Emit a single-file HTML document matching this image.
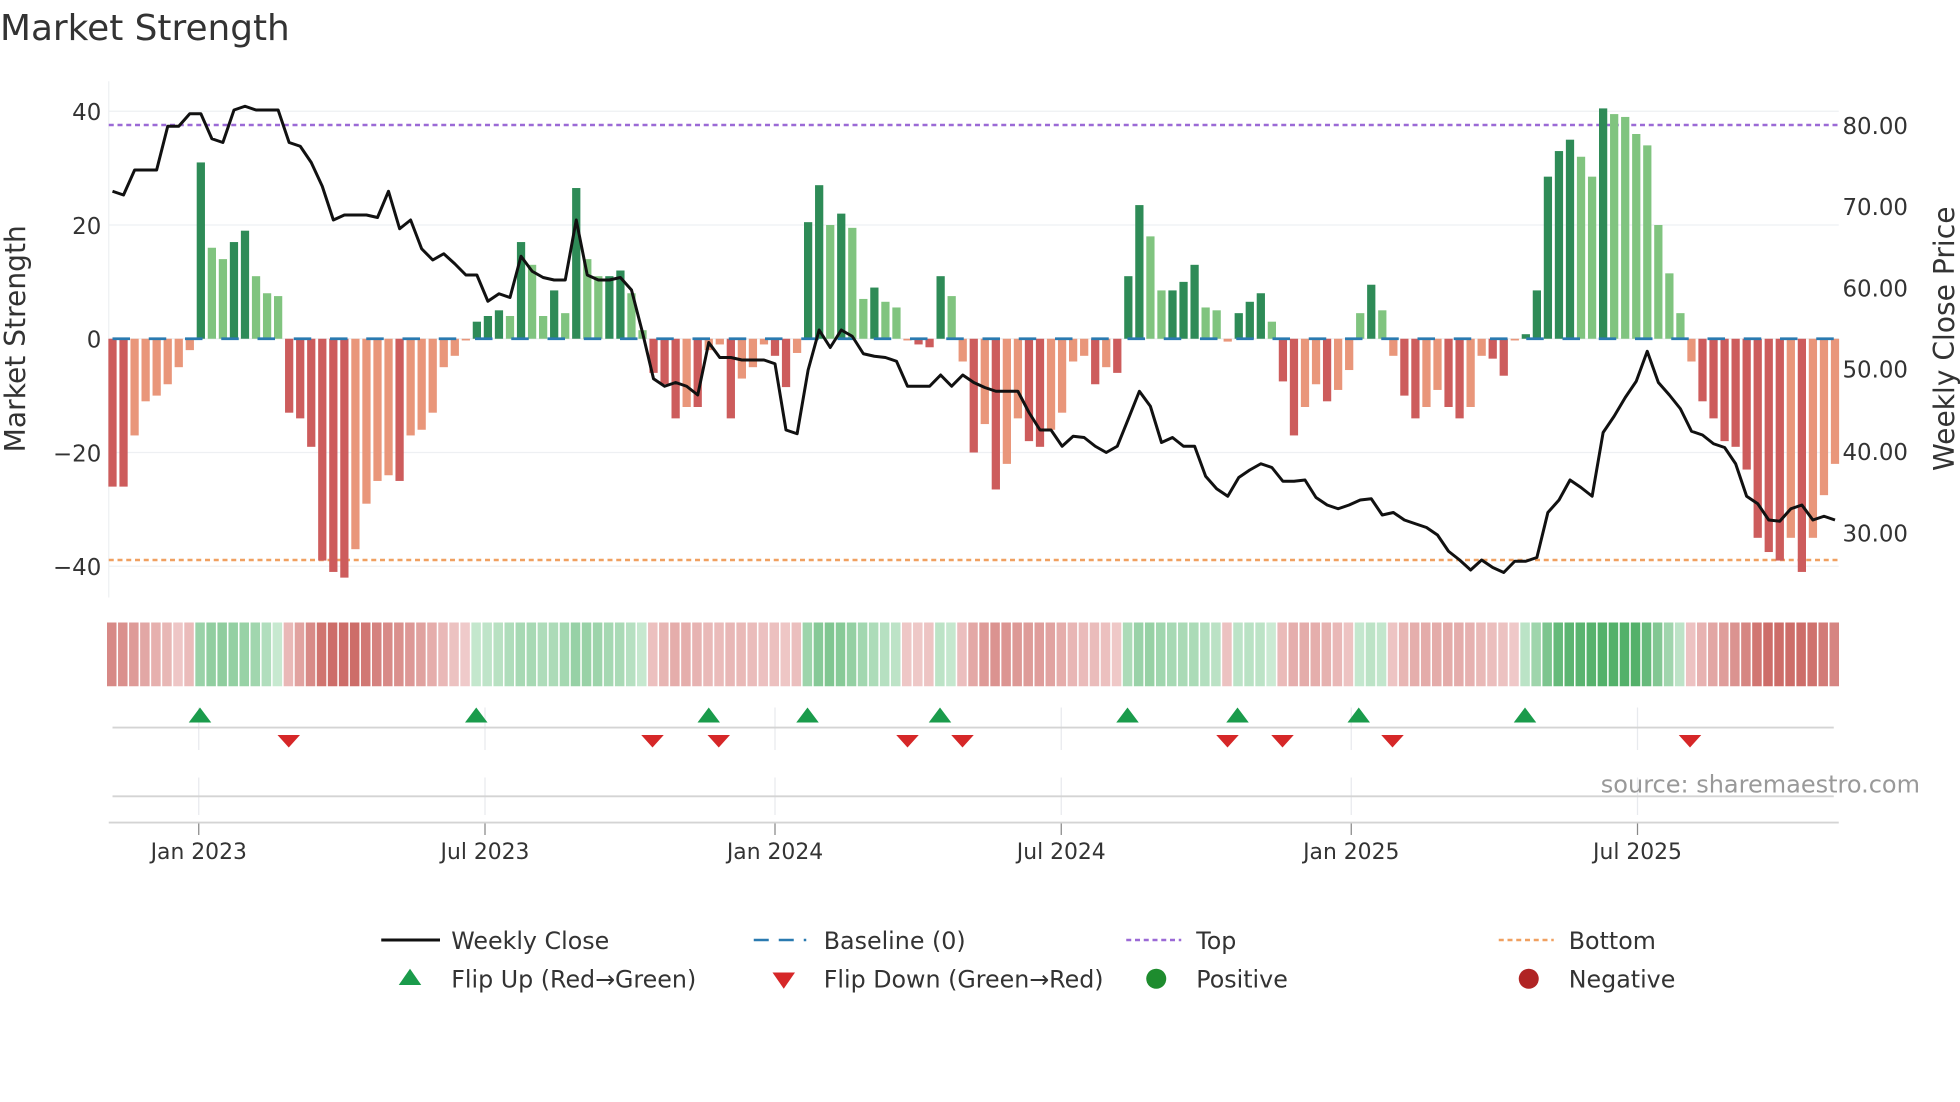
<!DOCTYPE html>
<html><head><meta charset="utf-8"><style>
html,body{margin:0;padding:0;background:#fff;}
svg{display:block;font-family:"DejaVu Sans","Liberation Sans",sans-serif;}
</style></head><body>
<svg id="s" width="1960" height="1102" viewBox="0 0 1568 881.6" xmlns="http://www.w3.org/2000/svg">
<rect width="1568" height="882" fill="#fff"/>
<text x="0" y="32" font-size="28.7" fill="#333">Market Strength</text>
<g id="grid"></g>
<g id="bars"></g>
<g id="heat"></g>
<g id="marks"></g>
<polyline id="line" fill="none" stroke="#111" stroke-width="2.4" stroke-linejoin="round"/>
<g font-size="18.3" fill="#333" text-anchor="end">
<text x="81" y="96">40</text><text x="81" y="187">20</text><text x="81" y="278">0</text><text x="81" y="369">−20</text><text x="81" y="460">−40</text>
</g>
<g font-size="18.3" fill="#333">
<text x="1474" y="107">80.00</text><text x="1474" y="172">70.00</text><text x="1474" y="237">60.00</text>
<text x="1474" y="302">50.00</text><text x="1474" y="368">40.00</text><text x="1474" y="433">30.00</text>
</g>
<text transform="translate(20,271) rotate(-90)" text-anchor="middle" font-size="22.5" fill="#333">Market Strength</text>
<text transform="translate(1563,271) rotate(-90)" text-anchor="middle" font-size="22.5" fill="#333">Weekly Close Price</text>
<g font-size="17.5" fill="#333" text-anchor="middle">
<text x="159" y="687">Jan 2023</text><text x="388" y="687">Jul 2023</text><text x="620" y="687">Jan 2024</text>
<text x="849" y="687">Jul 2024</text><text x="1081" y="687">Jan 2025</text><text x="1310" y="687">Jul 2025</text>
</g>
<text x="1536" y="634" text-anchor="end" font-size="19.2" fill="#999">source: sharemaestro.com</text>
<g font-size="19" fill="#333">
<line x1="305" y1="752" x2="352" y2="752" stroke="#111" stroke-width="2.4"/>
<text x="361" y="759">Weekly Close</text>
<line x1="603" y1="752" x2="645" y2="752" stroke="#2a7ab0" stroke-width="2" stroke-dasharray="12,8"/>
<text x="659" y="759">Baseline (0)</text>
<line x1="901" y1="752" x2="945" y2="752" stroke="#9b6ad6" stroke-width="2" stroke-dasharray="4,3"/>
<text x="957" y="759">Top</text>
<line x1="1199" y1="752" x2="1243" y2="752" stroke="#f0a060" stroke-width="2" stroke-dasharray="4,3"/>
<text x="1255" y="759">Bottom</text>
<polygon points="319,788 337,788 328,775" fill="#1a9b4b"/>
<text x="361" y="790">Flip Up (Red→Green)</text>
<polygon points="618,778 636,778 627,791" fill="#d62728"/>
<text x="659" y="790">Flip Down (Green→Red)</text>
<circle cx="925" cy="783" r="8" fill="#1e8c2e"/>
<text x="957" y="790">Positive</text>
<circle cx="1223" cy="783" r="8" fill="#b02424"/>
<text x="1255" y="790">Negative</text>
</g>
</svg>
<script>
var NS="http://www.w3.org/2000/svg";
function el(p,t,a){var e=document.createElementNS(NS,t);for(var k in a)e.setAttribute(k,a[k]);p.appendChild(e);return e;}
var V=[-26,-26,-17,-11,-10,-8,-5,-2,31,16,14,17,19,11,8,7.5,-13,-14,-19,-39,-41,-42,-37,-29,-25,-24,-25,-17,-16,-13,-5,-3,-0.3,3,4,5,4,17,13,4,8.5,4.5,26.5,14,11,11,12,8,1.5,-6,-8,-14,-12,-12,-2,-1,-14,-7,-5,-1,-3,-8.5,-2.5,20.5,27,20,22,19.5,7,9,6.5,5.5,-0.3,-1,-1.5,11,7.5,-4,-20,-15,-26.5,-22,-14,-18,-19,-16,-13,-4,-3,-8,-5,-6,11,23.5,18,8.5,8.5,10,13,5.5,5,-0.5,4.5,6.5,8,3,-7.5,-17,-12,-8,-11,-9,-5.5,4.5,9.5,5,-3,-10,-14,-12,-9,-12,-14,-12,-3,-3.5,-6.5,-0.3,0.8,8.5,28.5,33,35,32,28.5,40.5,39.5,39,36,34,20,11.5,4.5,-4,-11,-14,-18,-19,-23,-35,-37.5,-39,-35,-41,-35,-27.5,-22];
var L=[153,156,136,136,136,101,101,91,91,111,114,88,85,88,88,88,114,117,130,149,176,172,172,172,174,153,183,176,199,208,203,211,220,220,241,235,238,205,217,222,224,224,176,220,224,224,222,232,266,303,309,306,309,316,274,286,286,288,288,288,291,344,347,296,264,278,264,269,283,285,286,289,309,309,309,300,309,300,306,310,313,313,313,330,344,344,357,349,350,357,362,357,335,313,325,354,350,357,357,381,391,397,382,376,371,374,385,385,384,398,404,407,404,400,399,412,410,416,419,422,428,441,448,456,448,454,458,449,449,446,410,400,384,390,397,346,333,318,305,281,306,316,327,345,348,355,358,371,397,403,416,417,407,404,416,413,416];
var n=V.length,x0=90,x1=1468,dx=(x1-x0)/(n-1);
function X(i){return x0+i*dx;}
var g=document.getElementById('grid');
[89,180,271,362,453].forEach(function(y){el(g,'line',{x1:87,x2:1471,y1:y,y2:y,stroke:'#eef0f3','stroke-width':1});});
el(g,'line',{x1:87,x2:87,y1:65,y2:478,stroke:'#eef0f3','stroke-width':1});
[159,388,620,849,1081,1310].forEach(function(x){
 el(g,'line',{x1:x,x2:x,y1:566,y2:600,stroke:'#e8eaee','stroke-width':1});
 el(g,'line',{x1:x,x2:x,y1:622,y2:652,stroke:'#e8eaee','stroke-width':1});
 el(g,'line',{x1:x,x2:x,y1:658,y2:668,stroke:'#888','stroke-width':1});
});
el(g,'line',{x1:90,x2:1467,y1:582,y2:582,stroke:'#d4d4d4','stroke-width':1.5});
el(g,'line',{x1:90,x2:1467,y1:637,y2:637,stroke:'#d4d4d4','stroke-width':1.5});
el(g,'line',{x1:87,x2:1471,y1:658,y2:658,stroke:'#d4d4d4','stroke-width':1.5});
el(g,'line',{x1:87,x2:1471,y1:100,y2:100,stroke:'#9b6ad6','stroke-width':2,'stroke-dasharray':'4,3'});
el(g,'line',{x1:87,x2:1471,y1:448,y2:448,stroke:'#f0a060','stroke-width':2,'stroke-dasharray':'4,3'});
var b=document.getElementById('bars');
for(var i=0;i<n;i++){
 var v=V[i],dark=(i==0||Math.abs(v)>=Math.abs(V[i-1]));
 var c=v>0?(dark?'#2e8b57':'#80c47f'):(dark?'#cd5c5c':'#e9967a');
 var y0=271,h=Math.abs(v)*4.55;
 el(b,'rect',{x:X(i)-3.3,y:v>0?y0-h:y0,width:6.6,height:Math.max(h,0.8),fill:c});
}
el(b,'line',{x1:90,x2:1468,y1:271,y2:271,stroke:'#2a7ab0','stroke-width':2.2,'stroke-dasharray':'14,15'});
var hg=document.getElementById('heat');
for(var i=0;i<n;i++){
 var a=0,w=0;for(var k=-2;k<=2;k++){var j=i+k;if(j>=0&&j<n){a+=V[j]*(3-Math.abs(k));w+=3-Math.abs(k);}}
 a/=w;var v=V[i];var t=Math.min(1,Math.abs(a)/35);t=0.08+0.8*t;
 var c;
 if(v>0){c='rgb('+Math.round(215-(215-65)*t)+','+Math.round(240-(240-168)*t)+','+Math.round(222-(222-90)*t)+')';}
 else{c='rgb('+Math.round(243-(243-200)*t)+','+Math.round(212-(212-95)*t)+','+Math.round(212-(212-90)*t)+')';}
 el(hg,'rect',{x:X(i)-4.4,y:498,width:7.6,height:51,fill:c});
}
var m=document.getElementById('marks');
[160,381,567,646,752,902,990,1087,1220].forEach(function(x){el(m,'polygon',{points:(x-9)+',578 '+(x+9)+',578 '+x+',566',fill:'#1a9b4b'});});
[231,522,575,726,770,982,1026,1114,1352].forEach(function(x){el(m,'polygon',{points:(x-9)+',588 '+(x+9)+',588 '+x+',598',fill:'#d62728'});});
var p=[];for(var i=0;i<n;i++)p.push(X(i).toFixed(1)+','+L[i]);
document.getElementById('line').setAttribute('points',p.join(' '));
</script>
</body></html>
